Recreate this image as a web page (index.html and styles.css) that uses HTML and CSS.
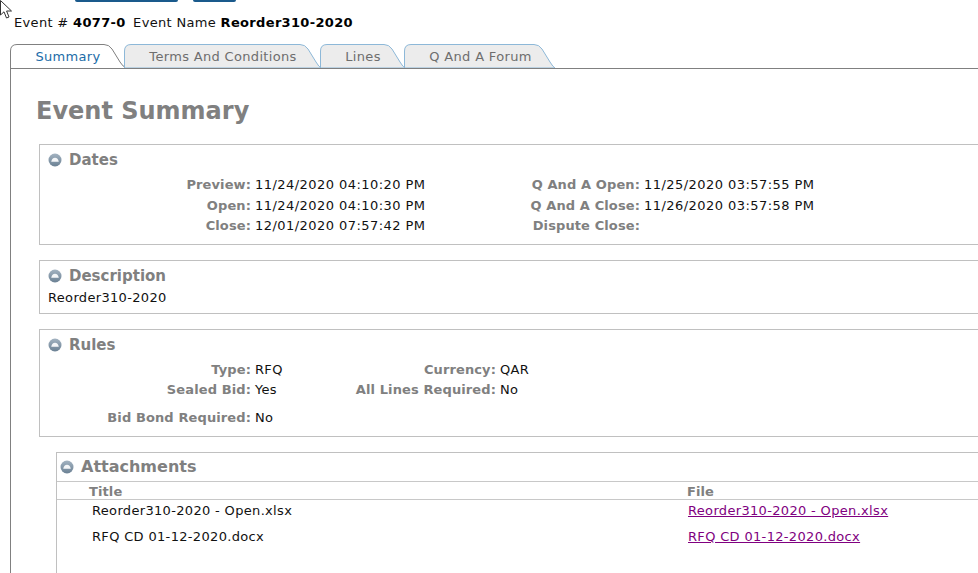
FILE: index.html
```html
<!DOCTYPE html>
<html lang="en">

<head>
    <meta charset="UTF-8">
    <meta name="viewport" content="width=device-width, initial-scale=1.0">
    <title>Event Summary</title>
    <link rel="stylesheet" href="styles.css">
</head>

<body>
    <!-- mouse pointer caught in the screenshot -->
    <svg class="cursor" width="13" height="20" viewBox="0 0 13 20">
        <path d="M0.5 0.5V15L4 11.8L6.5 18L9 17L6.6 11H11.5Z" fill="#fff" stroke="#333" stroke-width="1"/>
    </svg>

    <div class="top-buttons">
        <span class="top-button top-button-wide"></span>
        <span class="top-button top-button-small"></span>
    </div>

    <div class="event-line">
        Event # <strong class="event-num">4077-0</strong> Event Name <strong>Reorder310-2020</strong>
    </div>

    <div class="tabs">
        <div class="tab tab-active tab-summary">
            <svg class="tab-shape" width="116" height="24" viewBox="0 0 116 24">
                <path d="M0.5 24V7Q0.5 0.5 7 0.5H94Q99 0.5 102 5L110 18Q113 23 116 23.5" fill="#fff" stroke="#808080"/>
            </svg>
            <span class="tab-label">Summary</span>
        </div>
        <div class="tab tab-terms">
            <svg class="tab-shape" width="197" height="24" viewBox="0 0 197 24">
                <path d="M0.5 24V7Q0.5 0.5 7 0.5H176Q181 0.5 184 5L192 18Q195 23 197 24Z" fill="#ececec" stroke="#8db8d8"/>
            </svg>
            <span class="tab-label">Terms And Conditions</span>
        </div>
        <div class="tab tab-lines">
            <svg class="tab-shape" width="85" height="24" viewBox="0 0 85 24">
                <path d="M0.5 24V7Q0.5 0.5 7 0.5H64Q69 0.5 72 5L80 18Q83 23 85 24Z" fill="#ececec" stroke="#8db8d8"/>
            </svg>
            <span class="tab-label">Lines</span>
        </div>
        <div class="tab tab-forum">
            <svg class="tab-shape" width="151" height="24" viewBox="0 0 151 24">
                <path d="M0.5 24V7Q0.5 0.5 7 0.5H130Q135 0.5 138 5L146 18Q149 23 151 24Z" fill="#ececec" stroke="#8db8d8"/>
            </svg>
            <span class="tab-label">Q And A Forum</span>
        </div>
    </div>

    <div class="panel">
        <h1 class="page-title">Event Summary</h1>

        <div class="box box-dates">
            <h2 class="box-title">
                <svg class="toggle" width="14" height="14" viewBox="0 0 14 14"><use href="#toggle-icon"/></svg>
                Dates
            </h2>
            <div class="fields fields-dates">
                <span class="lbl">Preview:</span><span>11/24/2020 04:10:20 PM</span>
                <span class="lbl">Q And A Open:</span><span>11/25/2020 03:57:55 PM</span>
                <span class="lbl">Open:</span><span>11/24/2020 04:10:30 PM</span>
                <span class="lbl">Q And A Close:</span><span>11/26/2020 03:57:58 PM</span>
                <span class="lbl">Close:</span><span>12/01/2020 07:57:42 PM</span>
                <span class="lbl">Dispute Close:</span><span></span>
            </div>
        </div>

        <div class="box box-desc">
            <h2 class="box-title">
                <svg class="toggle" width="14" height="14" viewBox="0 0 14 14"><use href="#toggle-icon"/></svg>
                Description
            </h2>
            <div class="desc-text">Reorder310-2020</div>
        </div>

        <div class="box box-rules">
            <h2 class="box-title">
                <svg class="toggle" width="14" height="14" viewBox="0 0 14 14"><use href="#toggle-icon"/></svg>
                Rules
            </h2>
            <div class="fields fields-rules">
                <span class="lbl">Type:</span><span>RFQ</span>
                <span class="lbl">Currency:</span><span>QAR</span>
                <span class="lbl">Sealed Bid:</span><span>Yes</span>
                <span class="lbl">All Lines Required:</span><span>No</span>
                <span class="lbl row-gap">Bid Bond Required:</span><span class="row-gap">No</span>
            </div>
        </div>

        <div class="attachments">
            <h2 class="attach-title">
                <svg class="toggle" width="14" height="14" viewBox="0 0 14 14"><use href="#toggle-icon"/></svg>
                Attachments
            </h2>
            <div class="attach-head">
                <span>Title</span>
                <span>File</span>
            </div>
            <div class="attach-row">
                <span>Reorder310-2020 - Open.xlsx</span>
                <a href="#">Reorder310-2020 - Open.xlsx</a>
            </div>
            <div class="attach-row">
                <span>RFQ CD 01-12-2020.docx</span>
                <a href="#">RFQ CD 01-12-2020.docx</a>
            </div>
        </div>
    </div>

    <svg width="0" height="0" class="defs">
        <defs>
            <linearGradient id="toggle-fill" x1="0" y1="0" x2="0" y2="1">
                <stop offset="0" stop-color="#a3b3c1"/>
                <stop offset="1" stop-color="#6b8194"/>
            </linearGradient>
            <g id="toggle-icon">
                <circle cx="7" cy="7" r="6.5" fill="url(#toggle-fill)"/>
                <path d="M3.2 8.8Q4 4.8 7 4.8T10.8 8.8Z" fill="#f4f6f8"/>
            </g>
        </defs>
    </svg>
</body>

</html>
```

FILE: styles.css
```css
body {
    font-family: "DejaVu Sans", Verdana, sans-serif;
    font-size: 13px;
    letter-spacing: 0.33px;
    color: #111;
    background-color: #fff;
    margin: 0;
    height: 573px;
    overflow: hidden;
    position: relative;
}

.cursor {
    position: absolute;
    left: 0;
    top: 0;
}

.defs {
    position: absolute;
}

.top-buttons {
    display: flex;
    gap: 15px;
    height: 2px;
    padding-left: 75px;
}

.top-button {
    background-color: #1a5a8c;
    border-radius: 0 0 2px 2px;
}

.top-button-wide {
    width: 103px;
}

.top-button-small {
    width: 43px;
}

.event-line {
    margin-top: 13px;
    padding-left: 14px;
    height: 15px;
    line-height: 15px;
    white-space: nowrap;
}

.event-line strong {
    color: #000;
}

.event-num {
    margin-right: 3px;
}

.tabs {
    display: flex;
    margin-top: 14px;
    padding-left: 10px;
    height: 24px;
}

.tab {
    position: relative;
    height: 24px;
    text-align: center;
    line-height: 25px;
    color: #6e6e6e;
}

.tab-shape {
    position: absolute;
    left: 0;
    top: 0;
}

.tab-label {
    position: relative;
    left: 1px;
}

.tab-active {
    color: #1b6ca8;
}

.tab-summary {
    width: 114px;
}

.tab-terms {
    width: 196px;
}

.tab-lines {
    width: 84px;
}

.tab-forum {
    width: 151px;
}

.panel {
    border-top: 1px solid #808080;
    border-left: 1px solid #808080;
    margin-left: 10px;
    padding-left: 28px;
}

.page-title {
    font-size: 24px;
    line-height: 30px;
    font-weight: bold;
    letter-spacing: 0;
    color: #808080;
    margin: 27px 0 18px -3px;
}

.box {
    border: 1px solid #c0c0c0;
    border-right: none;
    margin-bottom: 15px;
    padding-left: 8px;
}

.box-title {
    display: flex;
    align-items: center;
    gap: 7px;
    font-size: 15px;
    line-height: 18px;
    font-weight: bold;
    letter-spacing: 0;
    color: #808080;
    margin: 6px 0 0;
}

.box-dates {
    height: 99px;
}

.box-desc {
    height: 52px;
}

.box-rules {
    height: 106px;
}

.fields {
    display: grid;
    margin-left: -8px;
    line-height: 20.5px;
    margin-top: 6px;
    white-space: nowrap;
}

.fields-dates {
    grid-template-columns: 211px 277px 112px 1fr;
    letter-spacing: 0.45px;
}

.fields-rules {
    grid-template-columns: 211px 103px 142px 1fr;
    line-height: 20px;
}

.fields span:nth-child(even) {
    padding-left: 4px;
}

.lbl {
    text-align: right;
    font-weight: bold;
    letter-spacing: 0.11px;
    color: #808080;
}

.row-gap {
    margin-top: 8px;
}

.desc-text {
    margin-top: 5px;
    line-height: 16px;
}

.attachments {
    border-top: 1px solid #c0c0c0;
    border-left: 1px solid #c0c0c0;
    margin-left: 17px;
    height: 120px;
}

.attach-title {
    display: flex;
    align-items: center;
    gap: 7px;
    font-size: 16px;
    line-height: 28px;
    height: 28px;
    font-weight: bold;
    letter-spacing: 0;
    color: #808080;
    margin: 0;
    padding-left: 3px;
    border-bottom: 1px solid #c8c8c8;
}

.attach-head {
    display: grid;
    grid-template-columns: 598px 1fr;
    padding-left: 32px;
    font-weight: bold;
    letter-spacing: 0.11px;
    color: #808080;
    line-height: 19px;
    height: 17px;
    border-bottom: 1px solid #c8c8c8;
}

.attach-row {
    display: grid;
    grid-template-columns: 596px 1fr;
    padding: 1px 0 5px 35px;
    line-height: 20px;
}

.attach-row a {
    color: #800080;
}
```
